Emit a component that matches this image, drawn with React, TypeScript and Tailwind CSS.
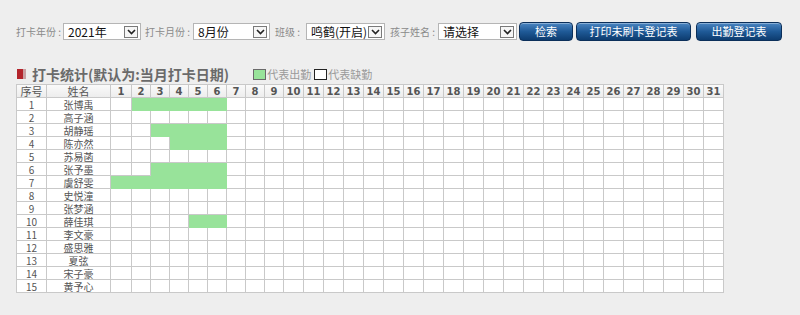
import React from 'react';

const NAMES = ['张博禹', '高子涵', '胡静瑶', '陈亦然', '苏易菡', '张予墨', '虞舒雯', '史悦潼', '张梦涵', '薛佳琪', '李文豪', '盛思雅', '夏弦', '宋子豪', '黄予心'];

// attendance ranges [from, to] per row index (1-based)
const PRESENT: Record<number, [number, number]> = {
  1: [2, 6],
  3: [3, 6],
  4: [4, 6],
  6: [3, 6],
  7: [1, 6],
  10: [5, 6],
};

const DAYS = Array.from({ length: 31 }, (_, i) => i + 1);

function dayWidth(d: number) {
  if (d === 1) return 'w-[21px]';
  if (d < 10) return 'w-[19px]';
  return 'w-[20px]';
}

function FakeSelect({ value, width }: { value: string; width: string }) {
  return (
    <div className={`${width} flex-none h-[17px] bg-white border border-[#b5b5b5] flex items-center justify-between pl-[4px] pr-[2px]`}>
      <span className="text-[12px] leading-none text-[#111] whitespace-nowrap">{value}</span>
      <span className="w-[14px] h-[12px] border border-[#7a7a7a] bg-[#f6f6f6] flex items-center justify-center">
        <svg width="9" height="6" viewBox="0 0 9 6">
          <path d="M1 1 L4.5 4.5 L8 1" fill="none" stroke="#222" strokeWidth="1.6" />
        </svg>
      </span>
    </div>
  );
}

function BlueButton({ label, width }: { label: string; width: string }) {
  return (
    <button className={`${width} flex-none h-[19px] rounded-[4px] border border-[#0b2f5a] bg-gradient-to-b from-[#4b86c2] via-[#1f5a97] to-[#0d3c70] text-white text-[11px] leading-none whitespace-nowrap shadow-[inset_0_1px_0_rgba(255,255,255,0.35)]`}>
      {label}
    </button>
  );
}

function Label({ text, width }: { text: string; width: string }) {
  return <span className={`${width} flex-none whitespace-nowrap text-[10px] text-[#8a8a8a]`}>{text}</span>;
}

export default function App() {
  return (
    <div className="w-[800px] h-[315px] bg-[#eeeeee] overflow-hidden" style={{ fontFamily: '"Noto Sans CJK SC", "Noto Sans", sans-serif' }}>
      {/* ── Filter bar ── */}
      <div className="flex items-center h-[19px] mt-[22px] pl-[16px]">
        <Label text="打卡年份 : " width="w-[47px]" />
        <FakeSelect value="2021年" width="w-[78px]" />
        <span className="ml-[4px]" />
        <Label text="打卡月份 : " width="w-[48px]" />
        <FakeSelect value="8月份" width="w-[77px]" />
        <span className="ml-[5px]" />
        <Label text="班级 : " width="w-[31px]" />
        <FakeSelect value="鸣鹤(开启)" width="w-[79px]" />
        <span className="ml-[5px]" />
        <Label text="孩子姓名 : " width="w-[48px]" />
        <FakeSelect value="请选择" width="w-[79px]" />
        <div className="ml-[2px] flex items-center gap-[3px]">
          <BlueButton label="检索" width="w-[54px]" />
          <BlueButton label="打印未刷卡登记表" width="w-[115px]" />
          <BlueButton label="出勤登记表" width="w-[86px] ml-[2px]" />
        </div>
      </div>

      {/* ── Title + legend ── */}
      <div className="flex items-center mt-[26px] pl-[17px] h-[14px]">
        <span className="w-[6px] h-[10px] bg-[#b3242b]" />
        <span className="w-[3px] h-[10px] bg-[#c9a0a2]" />
        <span className="ml-[6px] text-[14px] font-bold text-[#6a6a6a] leading-none whitespace-nowrap">打卡统计(默认为:当月打卡日期)</span>
        <span className="ml-[24px] flex-none w-[13px] h-[11px] bg-[#98e39a] border border-[#6a6a6a]" />
        <span className="ml-[1px] text-[11px] text-[#9a9a9a] leading-none whitespace-nowrap">代表出勤</span>
        <span className="ml-[3px] flex-none w-[13px] h-[11px] bg-white border border-[#222]" />
        <span className="ml-[1px] text-[11px] text-[#9a9a9a] leading-none whitespace-nowrap">代表缺勤</span>
      </div>

      {/* ── Attendance table ── */}
      <table className="ml-[16px] mt-[3px] border-collapse table-fixed bg-white text-center">
        <thead>
          <tr className="h-[13px] bg-gradient-to-b from-[#fafafa] to-[#ececec]">
            <th className="w-[30px] border border-[#c9c9c9] p-0 text-[11px] font-normal text-[#555] leading-[11px]">序号</th>
            <th className="w-[64px] border border-[#c9c9c9] p-0 text-[11px] font-normal text-[#555] leading-[11px]">姓名</th>
            {DAYS.map((d) => (
              <th
                key={d}
                className={`${dayWidth(d)} border border-[#c9c9c9] p-0 text-[10px] font-bold text-[#555] leading-[11px]`}
                style={{ fontFamily: '"DejaVu Sans", Verdana, sans-serif' }}
              >
                {d}
              </th>
            ))}
          </tr>
        </thead>
        <tbody>
          {NAMES.map((name, i) => {
            const no = i + 1;
            const range = PRESENT[no];
            return (
              <tr key={no} className="h-[13px]">
                <td className="border border-[#c9c9c9] p-0 text-[10px] text-[#555] leading-[11px]">{no}</td>
                <td className="border border-[#c9c9c9] p-0 text-[10px] text-[#555] leading-[11px]">{name}</td>
                {DAYS.map((d) => {
                  const on = range && d >= range[0] && d <= range[1];
                  return (
                    <td
                      key={d}
                      className={`border p-0 ${on ? 'bg-[#98e39a] border-[#98e39a]' : 'border-[#c9c9c9]'}`}
                    />
                  );
                })}
              </tr>
            );
          })}
        </tbody>
      </table>
    </div>
  );
}
